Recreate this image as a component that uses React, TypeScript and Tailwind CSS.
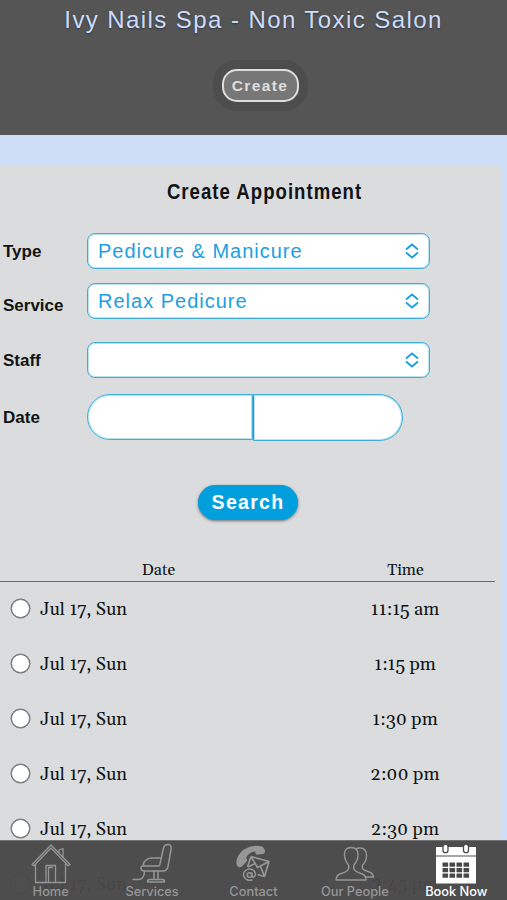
import type { ReactNode } from 'react'

const fields = [
  { label: 'Type', value: 'Pedicure & Manicure', row: 'pt-[68px]', labelOffset: 'pt-0.5' },
  { label: 'Service', value: 'Relax Pedicure', row: 'pt-3.5', labelOffset: 'pt-[9px]' },
  { label: 'Staff', value: '', row: 'pt-[23px]', labelOffset: 'pt-0.5' },
]

const slots = ['11:15 am', '1:15 pm', '1:30 pm', '2:00 pm', '2:30 pm', '2:45 pm']

function HomeIcon() {
  return (
    <svg width="40" height="42" viewBox="0 0 40 42" fill="none" stroke="currentColor" strokeWidth="1.3" strokeLinejoin="round">
      <path d="M4.5 21v18.5h30V21" />
      <path d="M1 21.5 20 2l19 19.5-1.8 1.3L20 5 2.8 22.8z" />
      <path d="M28 10V7l4-1.5v9" />
      <path d="M15 39.5v-17h9.5v17M17.5 39.5v-15H22" />
    </svg>
  )
}

function ChairIcon() {
  return (
    <svg width="42" height="42" viewBox="0 0 42 42" fill="none" stroke="currentColor" strokeWidth="1.5" strokeLinecap="round" strokeLinejoin="round">
      <path d="M32.500 5q1-3.500 4.500-3.500 4 .3 3 5L37 23.500q-1 4.500-5 4.500H13q-3 0-3-2.700T13 23h14.500q1 0 1.300-1.300z" />
      <path d="M12.500 22.500q-.5-3 2-5 2.500-2.500 6-2.500h9" />
      <path d="M23 28v8.500M27 28v8.500M18.500 36.500h13q2 0 2 2.500h-17q0-2.500 2-2.500z" />
      <path d="M13.500 28.500q-.5 8-6 8H2" />
    </svg>
  )
}

function ContactIcon() {
  return (
    <svg width="36" height="38" viewBox="0 0 36 38" fill="none">
      <path d="M3.500 22Q1 21 1.500 15 4 6 13 2.500 20-.5 27 1.500q3 2 3 5.500-.5 1.500-2 2l-6 .8q-1.500-.5-2-3.300-6 .5-9 6.500 1.500 1.500 1 3L7 21.500q-1.500 1.300-3.500.5z" fill="currentColor" />
      <path d="m16 11.500 18 5-4.500 15-7-2M16 11.500 12.500 22M16 11.500l6.500 11L34 16.500M29.500 31.500 25.500 21.500M13 22l7-3.500" stroke="currentColor" strokeWidth="1.700" strokeLinejoin="round" />
      <circle cx="14.500" cy="30" r="2.300" stroke="currentColor" strokeWidth="1.500" />
      <path d="M17 27.500v3q0 2 1.500 1.500 2-.5 2-3a6 5.700 0 1 0-3 5.600" stroke="currentColor" strokeWidth="1.500" />
    </svg>
  )
}

function PeopleIcon() {
  return (
    <svg width="40" height="36" viewBox="0 0 40 36" fill="none" stroke="currentColor" strokeWidth="1.4" strokeLinejoin="round">
      <path d="M16 1.5q-6.500 0-6.500 7 0 6 4 10.500 1 4-1 5.500-1.500 1.500-6 3Q1 29 1 34h30q0-5-5-6.500-4.500-1.500-6-3-2-1.500-1-5.500 4-4.500 4-10.500 0-7-7-7z" />
      <path d="M20.500 3Q23 1.800 25.500 2q6 .5 6 7.500 0 6-4 9.500-.5 3 .5 4 1.500 1.500 5 2.500 5 1.500 5.500 5.500h-8" />
    </svg>
  )
}

function CalendarIcon() {
  return (
    <svg width="42" height="40" viewBox="0 0 42 40">
      <path d="M1 3h40v8.500H1zM1 12.500h40V39.500H1z" fill="#fff" />
      <g fill="#fff" stroke="#484848" strokeWidth="1.3">
        <rect x="8" y=".2" width="5" height="8.500" rx="2.500" />
        <rect x="28.500" y=".2" width="5" height="8.500" rx="2.500" />
      </g>
      <g fill="#484848">
        {[18.5, 24, 29.5].map((y) =>
          [7.5, 14.5, 21.5, 28.5].map((x) => <rect key={`${x}-${y}`} x={x} y={y} width="5.6" height="4.2" rx=".5" />)
        )}
      </g>
    </svg>
  )
}

const tabs: { name: string; icon: ReactNode; active?: boolean }[] = [
  { name: 'Home', icon: <HomeIcon /> },
  { name: 'Services', icon: <ChairIcon /> },
  { name: 'Contact', icon: <ContactIcon /> },
  { name: 'Our People', icon: <PeopleIcon /> },
  { name: 'Book Now', icon: <CalendarIcon />, active: true },
]

function SelectArrows() {
  return (
    <svg width="14" height="16" viewBox="0 0 14 16" fill="none" stroke="#1b9fe0" strokeWidth="1.9">
      <path d="m1 6.5 6-5 6 5M1 9.500l6 5 6-5" />
    </svg>
  )
}

export default function App() {
  return (
    <div className="relative h-[900px] w-full overflow-hidden bg-[#cdddf5] font-['Liberation_Sans',sans-serif]">
      <header className="flex h-[135px] flex-col items-center bg-[#555555]">
        <h1 className="pt-1 text-[24px] leading-8 tracking-[1.42px] whitespace-nowrap text-[#cfdcf8] [text-shadow:0_1px_2px_rgba(20,30,60,0.6)]">
          Ivy Nails Spa - Non Toxic Salon
        </h1>
        <div className="mt-6 ml-[13px] rounded-[24px] bg-[#4d4d4d] p-[9px]">
          <button className="flex h-[33px] w-[77px] items-center justify-center rounded-[15px] border-2 border-[#dedede] bg-[#777777] pt-px text-[15.5px] font-bold tracking-[1.4px] text-[#dedede]">
            Create
          </button>
        </div>
      </header>

      <main className="mt-[30px] h-[735px] w-[502px] rounded-tr-[5px] bg-[#dadcdd] pt-[11px] text-[#111315]">
        <h2 className="ml-[27px] scale-x-[0.845] text-center text-[22px] leading-8 font-bold tracking-[1.2px]">
          Create Appointment
        </h2>
        <div className="-mt-[43px]">
          {fields.map((field) => (
            <div key={field.label} className={`flex items-center ${field.row}`}>
              <label className={`w-[87px] pl-[3px] text-[17px] leading-5 font-bold ${field.labelOffset}`}>{field.label}</label>
              <div className="flex h-9 w-[343px] items-center justify-between rounded-lg border border-[#3eaddb] bg-white px-2.5 text-[20px] tracking-[1px] text-[#1b9fe0] shadow-[inset_0_0_0_1px_rgba(62,173,219,0.35)]">
                <span>{field.value}</span>
                <SelectArrows />
              </div>
            </div>
          ))}
        </div>
        <div className="flex items-start pt-4">
          <label className="w-[87px] pt-3.5 pl-[3px] text-[17px] leading-5 font-bold">Date</label>
          <div className="h-[46px] w-[166px] rounded-l-full border border-[#3eaddb] bg-white shadow-[inset_0_0_0_1px_rgba(62,173,219,0.35)]" />
          <div className="h-[47px] w-[150px] rounded-r-full rounded-l-sm border border-[#3eaddb] border-l-[#1b9fe0] bg-white shadow-[inset_0_0_0_1px_rgba(62,173,219,0.35)]" />
        </div>
        <button className="mt-[44px] ml-[198px] flex h-[35px] w-[100px] items-center justify-center rounded-full bg-[#029fdf] pt-px text-[19.5px] font-bold tracking-[1.3px] text-white shadow-[0_1px_3px_rgba(0,0,0,0.5)]">
          Search
        </button>

        <div className="mt-[36px] font-[Georgia,Gelasio,'Liberation_Serif',serif]">
          <div className="flex h-[26px] w-[495px] items-center border-b border-[#65676b] pt-0.5 text-[16px]">
            <span className="w-[317px] text-center">Date</span>
            <span className="w-[177px] text-center">Time</span>
          </div>
          {slots.map((time) => (
            <div key={time} className="flex h-[55px] items-center pb-[3px] text-[18.2px]">
              <span className="ml-[11px] size-[19px] rounded-full border border-[#77797c] bg-white shadow-[0_0_0_0.5px_#77797c]" />
              <span className="ml-2.5 w-[276px] pt-[3px]">Jul 17, Sun</span>
              <span className="w-[178px] pt-[3px] text-center">{time}</span>
            </div>
          ))}
        </div>
      </main>

      <nav className="absolute inset-x-0 bottom-0 grid h-[60px] grid-cols-5 border-t border-[#707070] bg-[#484848]/97 font-[Inter,sans-serif] text-[12.8px] text-[#969696]">
        {tabs.map((tab) => (
          <a key={tab.name} className={`flex flex-col items-center pt-[3px] ${tab.active ? 'text-white' : ''}`}>
            <span className="flex h-10 items-center">{tab.icon}</span>
            <span className="leading-[15px] font-medium whitespace-nowrap">{tab.name}</span>
          </a>
        ))}
      </nav>
    </div>
  )
}
